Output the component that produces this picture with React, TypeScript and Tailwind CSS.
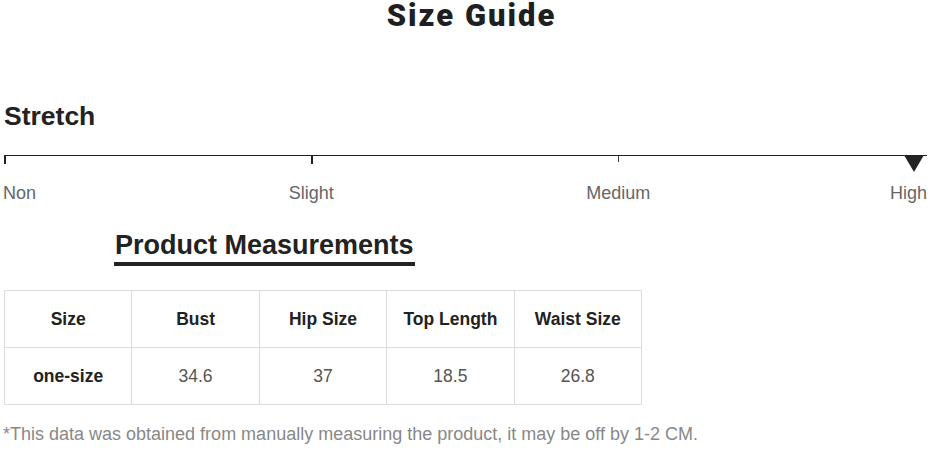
export default function App() {
  const heads = ["Size", "Bust", "Hip Size", "Top Length", "Waist Size"];
  const vals = ["34.6", "37", "18.5", "26.8"];

  return (
    <div className="w-[933px] h-[451px] bg-white overflow-hidden font-['Liberation_Sans',Arial,sans-serif]">
      <h1 className="h-[32px] flex items-center justify-center pl-[10px] text-[31px] font-black text-[#1f1f1f] leading-[32px] font-['Roboto',sans-serif] tracking-[2px]">
        Size Guide
      </h1>

      <div className="pl-[4px] pr-[6px]">
        <h2 className="mt-[68px] text-[26.5px] font-bold text-[#222] leading-[32px]">Stretch</h2>

        {/* scale */}
        <div className="mt-[23px] relative h-[16px]">
          <div className="h-px bg-[#222]" />
          <div className="grid grid-cols-3">
            <div className="w-[2px] h-[8px] bg-[#222]" />
            <div className="w-[2px] h-[8px] bg-[#222] -ml-[1px]" />
            <div className="w-[1px] h-[6px] bg-[#444] -ml-[1px]" />
          </div>
          <svg className="absolute right-[3px] top-0" width="20" height="17" viewBox="0 0 20 17">
            <polygon points="0,0 20,0 10,17" fill="#222" />
          </svg>
        </div>

        <div className="mt-[11px] flex justify-between text-[18px] text-[#666] leading-[22px]">
          <span className="-ml-[1px]">Non</span>
          <span className="ml-[13px]">Slight</span>
          <span className="ml-[13px]">Medium</span>
          <span>High</span>
        </div>

        <div className="mt-[25px] pl-[110px]">
          <h2 className="inline-block text-[27px] font-bold text-[#222] leading-[32px] pb-[1px] border-b-[4px] border-[#222] px-[1px]">
            Product Measurements
          </h2>
        </div>

        <table className="mt-[24px] border-collapse w-[638px] table-fixed text-[17.5px]">
          <tbody>
            <tr className="h-[57px]">
              {heads.map((h) => (
                <th key={h} className="border border-[#dcdcdc] font-bold text-[#222] text-center">
                  {h}
                </th>
              ))}
            </tr>
            <tr className="h-[57px]">
              <td className="border border-[#dcdcdc] font-bold text-[#222] text-center">one-size</td>
              {vals.map((v) => (
                <td key={v} className="border border-[#dcdcdc] text-[#555] text-center">
                  {v}
                </td>
              ))}
            </tr>
          </tbody>
        </table>

        <p className="mt-[18px] -ml-[1px] text-[18px] text-[#888] leading-[22px]">
          *This data was obtained from manually measuring the product, it may be off by 1-2 CM.
        </p>
      </div>
    </div>
  );
}
